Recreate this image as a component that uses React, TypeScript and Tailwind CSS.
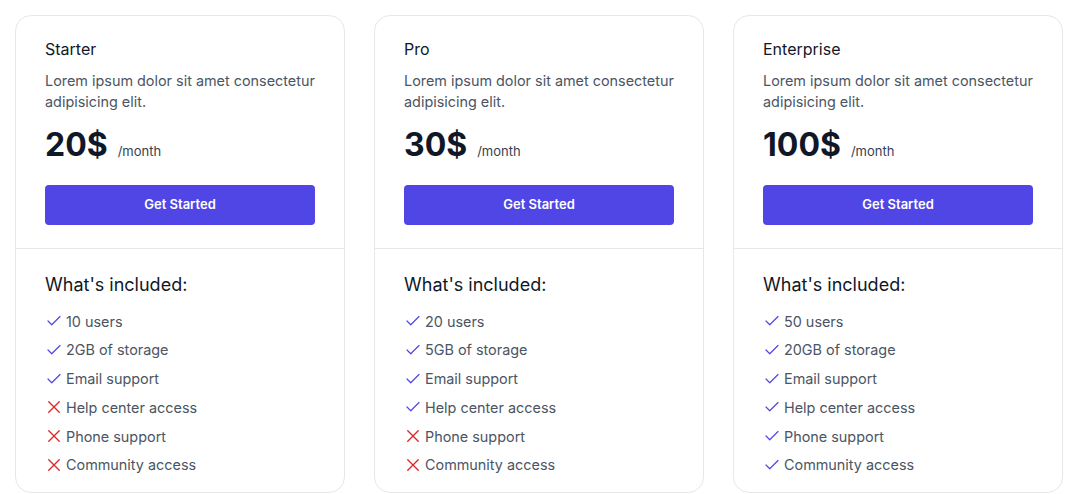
import React from "react";

interface Plan {
  name: string;
  price: string;
  features: { label: string; included: boolean }[];
}

const plans: Plan[] = [
  {
    name: "Starter",
    price: "20$",
    features: [
      { label: "10 users", included: true },
      { label: "2GB of storage", included: true },
      { label: "Email support", included: true },
      { label: "Help center access", included: false },
      { label: "Phone support", included: false },
      { label: "Community access", included: false },
    ],
  },
  {
    name: "Pro",
    price: "30$",
    features: [
      { label: "20 users", included: true },
      { label: "5GB of storage", included: true },
      { label: "Email support", included: true },
      { label: "Help center access", included: true },
      { label: "Phone support", included: false },
      { label: "Community access", included: false },
    ],
  },
  {
    name: "Enterprise",
    price: "100$",
    features: [
      { label: "50 users", included: true },
      { label: "20GB of storage", included: true },
      { label: "Email support", included: true },
      { label: "Help center access", included: true },
      { label: "Phone support", included: true },
      { label: "Community access", included: true },
    ],
  },
];

const CheckIcon = () => (
  <svg
    width="18"
    height="18"
    viewBox="0 0 24 24"
    fill="none"
    stroke="currentColor"
    strokeWidth="1.6"
    strokeLinecap="round"
    strokeLinejoin="round"
    className="text-[#4f46e5] shrink-0"
  >
    <path d="M20 6 9 17l-5-5" />
  </svg>
);

const XIcon = () => (
  <svg
    width="18"
    height="18"
    viewBox="0 0 24 24"
    fill="none"
    stroke="currentColor"
    strokeWidth="1.8"
    strokeLinecap="round"
    strokeLinejoin="round"
    className="text-[#dc2626] shrink-0"
  >
    <path d="M19 5 5 19M5 5l14 14" />
  </svg>
);

const PlanCard = ({ plan }: { plan: Plan }) => {
  return (
    <div className="bg-white border border-gray-200 rounded-2xl overflow-hidden">
      {/* Top */}
      <div className="px-[29px] pt-[21px] pb-[23px]">
        <h3 className="text-base leading-6 text-gray-900">{plan.name}</h3>
        <p className="mt-[9px] text-[14.4px] leading-[21px] text-[#4b5563]">
          Lorem ipsum dolor sit amet consectetur adipisicing elit.
        </p>
        <div className="mt-[17px] flex items-baseline gap-[10px]">
          <span className="text-[32px] leading-8 font-bold text-gray-900">
            {plan.price}
          </span>
          <span className="text-[13px] text-[#374151]">/month</span>
        </div>
        <button className="mt-[23px] w-full h-10 rounded bg-[#4f46e5] text-white text-[13px] font-semibold">
          Get Started
        </button>
      </div>

      {/* Features */}
      <div className="border-t border-gray-200 px-[29px] pt-[22px] pb-[17px]">
        <h4 className="text-lg leading-7 text-gray-900">What's included:</h4>
        <ul className="mt-[12px] flex flex-col gap-[7.8px]">
          {plan.features.map((f) => (
            <li
              key={f.label}
              className="flex items-center gap-[3px] text-[14.4px] leading-[21px] text-[#4b5563]"
            >
              {f.included ? <CheckIcon /> : <XIcon />}
              <span>{f.label}</span>
            </li>
          ))}
        </ul>
      </div>
    </div>
  );
};

export default function App() {
  return (
    <div
      className="min-h-screen bg-white pt-[15px] pl-[15px] pr-[16px]"
      style={{ fontFamily: "Inter, 'Noto Sans', sans-serif" }}
    >
      <div className="grid grid-cols-3 gap-[29px]">
        {plans.map((p) => (
          <PlanCard key={p.name} plan={p} />
        ))}
      </div>
    </div>
  );
}
